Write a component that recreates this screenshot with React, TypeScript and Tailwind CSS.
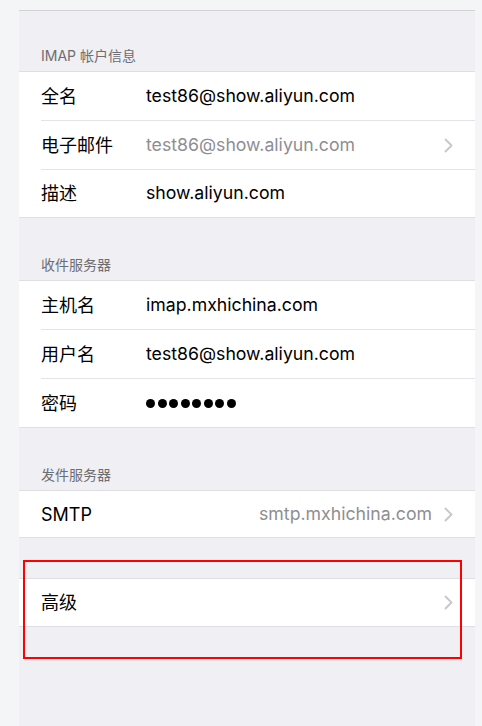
import React from "react";

type Row = {
  label: string;
  value?: string;
  muted?: boolean;
  chevron?: boolean;
  align?: "left" | "right";
  password?: boolean;
};

// lastH keeps each white group at the reference height once its borders are added
const sections: { title?: string; headerH: string; lastH: string; rows: Row[] }[] = [
  {
    title: "IMAP 帐户信息",
    headerH: "h-[60px]",
    lastH: "h-[47px]",
    rows: [
      { label: "全名", value: "test86@show.aliyun.com" },
      { label: "电子邮件", value: "test86@show.aliyun.com", muted: true, chevron: true },
      { label: "描述", value: "show.aliyun.com" },
    ],
  },
  {
    title: "收件服务器",
    headerH: "h-[62px]",
    lastH: "h-[48px]",
    rows: [
      { label: "主机名", value: "imap.mxhichina.com" },
      { label: "用户名", value: "test86@show.aliyun.com" },
      { label: "密码", password: true },
    ],
  },
  {
    title: "发件服务器",
    headerH: "h-[62px]",
    lastH: "h-[46px]",
    rows: [{ label: "SMTP", value: "smtp.mxhichina.com", muted: true, chevron: true, align: "right" }],
  },
  {
    headerH: "h-[40px]",
    lastH: "h-[47px]",
    rows: [{ label: "高级", chevron: true }],
  },
];

function Chevron() {
  return (
    <svg width="9" height="15" viewBox="0 0 9 15" className="shrink-0">
      <polyline points="1.5,1.5 7.5,7.5 1.5,13.5" fill="none" stroke="#c7c7cc" strokeWidth="1.8" strokeLinecap="round" strokeLinejoin="round" />
    </svg>
  );
}

function SettingRow({ row, last, lastH }: { row: Row; last: boolean; lastH: string }) {
  return (
    <div className="pl-[22px]">
      <div className={`flex items-center pr-[22px] ${last ? lastH : "h-[49px] border-b border-[#e3e3e8]"}`}>
        <div className="w-[105px] shrink-0 text-[18px] text-black">{row.label}</div>
        {row.password ? (
          <div className="flex-1 flex gap-[2.5px]">
            {Array.from({ length: 8 }).map((_, i) => (
              <span key={i} className="w-[9px] h-[9px] rounded-full bg-black" />
            ))}
          </div>
        ) : (
          <div
            className={`flex-1 text-[17.7px] truncate ${row.muted ? "text-[#8e8e93]" : "text-black"} ${
              row.align === "right" ? "text-right pr-[12px]" : ""
            }`}
          >
            {row.value}
          </div>
        )}
        {row.chevron && <Chevron />}
      </div>
    </div>
  );
}

export default function App() {
  return (
    <div
      className="relative min-h-screen bg-[#f4f5f7] pl-[19px] pr-[7px] pt-[10px]"
      style={{ fontFamily: '"Inter", "Noto Sans CJK SC", sans-serif' }}
    >
      <div className="border-t border-[#d2d2d7] bg-[#efeff4] min-h-[716px]">
        {sections.map((s, i) => (
          <div key={i}>
            <div className={`${s.headerH} flex items-end pl-[22px] pb-[5px] text-[14px] leading-[20px] text-[#6d6d72]`}>
              {s.title}
            </div>
            <div className="bg-white border-y border-[#dedee3]">
              {s.rows.map((r, j) => (
                <SettingRow key={j} row={r} last={j === s.rows.length - 1} lastH={s.lastH} />
              ))}
            </div>
          </div>
        ))}
      </div>

      {/* annotation box */}
      <div className="absolute left-[23px] top-[560px] w-[439px] h-[99px] border-2 border-[#ff0000]" />
    </div>
  );
}
